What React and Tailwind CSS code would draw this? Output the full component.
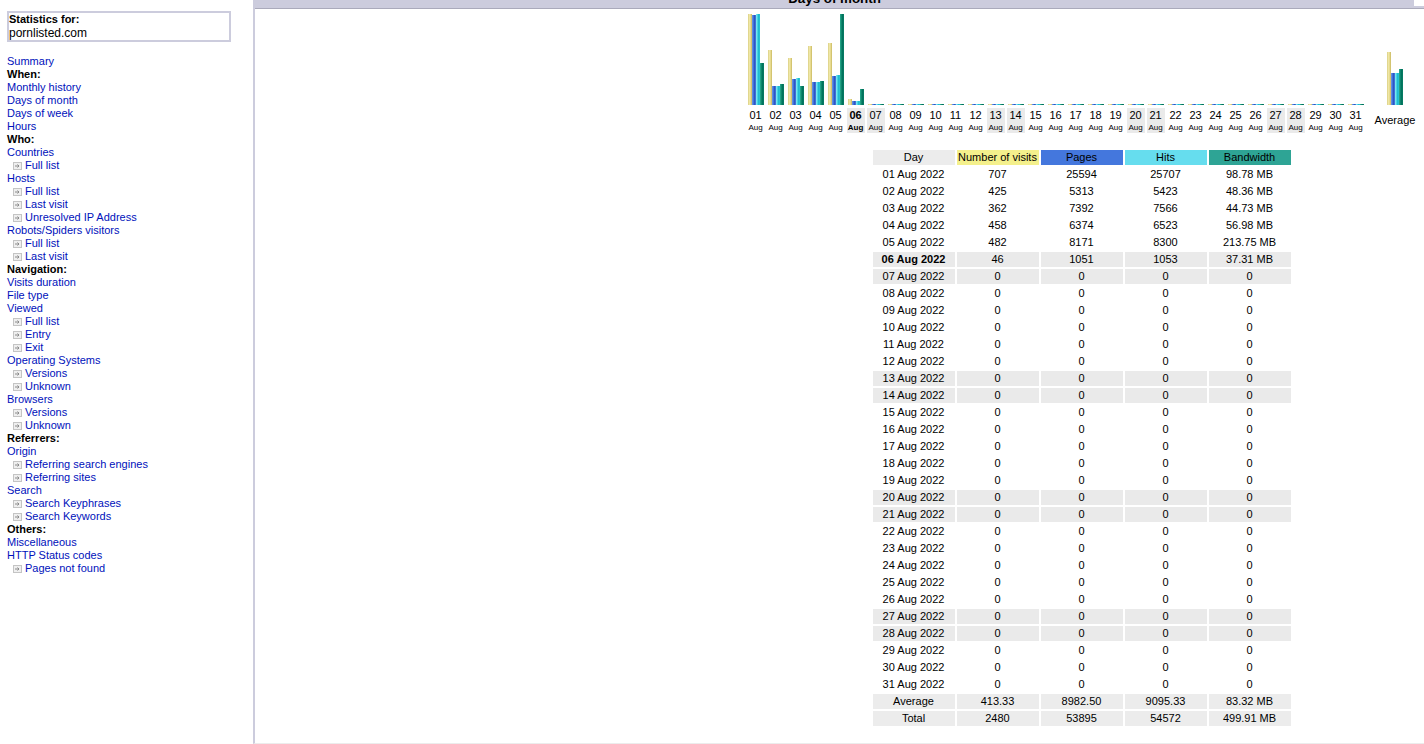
const navItems = [
  { t: "Summary" },
  { t: "When:", h: true },
  { t: "Monthly history" },
  { t: "Days of month" },
  { t: "Days of week" },
  { t: "Hours" },
  { t: "Who:", h: true },
  { t: "Countries" },
  { t: "Full list", sub: true },
  { t: "Hosts" },
  { t: "Full list", sub: true },
  { t: "Last visit", sub: true },
  { t: "Unresolved IP Address", sub: true },
  { t: "Robots/Spiders visitors" },
  { t: "Full list", sub: true },
  { t: "Last visit", sub: true },
  { t: "Navigation:", h: true },
  { t: "Visits duration" },
  { t: "File type" },
  { t: "Viewed" },
  { t: "Full list", sub: true },
  { t: "Entry", sub: true },
  { t: "Exit", sub: true },
  { t: "Operating Systems" },
  { t: "Versions", sub: true },
  { t: "Unknown", sub: true },
  { t: "Browsers" },
  { t: "Versions", sub: true },
  { t: "Unknown", sub: true },
  { t: "Referrers:", h: true },
  { t: "Origin" },
  { t: "Referring search engines", sub: true },
  { t: "Referring sites", sub: true },
  { t: "Search" },
  { t: "Search Keyphrases", sub: true },
  { t: "Search Keywords", sub: true },
  { t: "Others:", h: true },
  { t: "Miscellaneous" },
  { t: "HTTP Status codes" },
  { t: "Pages not found", sub: true },
];

const weekend = [6, 7, 13, 14, 20, 21, 27, 28];

const stats = {
  1: ["707", "25594", "25707", "98.78 MB"],
  2: ["425", "5313", "5423", "48.36 MB"],
  3: ["362", "7392", "7566", "44.73 MB"],
  4: ["458", "6374", "6523", "56.98 MB"],
  5: ["482", "8171", "8300", "213.75 MB"],
  6: ["46", "1051", "1053", "37.31 MB"],
};

const barHeights = {
  1: [91, 90, 91, 42],
  2: [55, 19, 19, 21],
  3: [47, 26, 27, 19],
  4: [59, 23, 23, 24],
  5: [62, 29, 30, 91],
  6: [6, 4, 4, 16],
};

const days = Array.from({ length: 31 }, (_, i) => i + 1);
const pad = (n) => String(n).padStart(2, "0");

const barColors = [
  "bg-[linear-gradient(90deg,#d8cc80,#f0e8a8,#e6d98c,#c8b860)]",
  "bg-[linear-gradient(90deg,#7099e8,#4477dd,#2a50c0,#5080e0)]",
  "bg-[linear-gradient(90deg,#8deef5,#50d8e8,#18b8cc,#30c8d8)]",
  "bg-[linear-gradient(90deg,#2fae90,#108a70,#00705a,#0a8068)]",
];

const Bars = ({ heights }) => (
  <div className="flex items-end justify-center">
    {heights.map((h, i) => (
      <div key={i} className={`w-1 ${barColors[i]}`} style={{ height: h }} />
    ))}
  </div>
);

const NavIcon = () => (
  <svg width="9" height="8" viewBox="0 0 9 8" className="mr-[3px] ml-[6px] inline-block align-[-1px]">
    <rect x="0.5" y="0.5" width="8" height="7" fill="#efefef" stroke="#c4c4c4" />
    <path d="M2 4h4M4.5 2.5L6 4 4.5 5.5" fill="none" stroke="#8a8a8a" strokeWidth="1" />
  </svg>
);

const Cell = ({ children, className = "" }) => (
  <div className={`flex h-[15px] w-[82px] items-center justify-center pr-px leading-[15px] ${className}`}>{children}</div>
);

export default function App() {
  return (
    <div className="relative flex h-[744px] w-[1424px] overflow-hidden bg-white font-['Liberation_Sans',Arial,sans-serif] text-[11px] leading-[13px] text-black">
      <aside className="w-[253px] shrink-0 pt-[11px] pl-[7px]">
        <div className="h-[31px] w-[224px] border-2 border-[#ccccdd]">
          <div className="font-bold">Statistics for:</div>
          <div className="text-[12px] leading-[14px]">pornlisted.com</div>
        </div>
        <nav className="mt-[13px]">
          {navItems.map((item, i) =>
            item.h ? (
              <div key={i} className="h-[13px] font-bold">{item.t}</div>
            ) : (
              <div key={i} className="h-[13px]">
                {item.sub && <NavIcon />}
                <a href="#" className="text-[#0011bb]">{item.t}</a>
              </div>
            )
          )}
        </nav>
      </aside>

      <main className="flex h-[744px] w-[1171px] flex-col border-b border-l-2 border-[#ccccdd] border-b-[#ececec]">
        <div className="flex h-[9px] w-full items-end justify-center overflow-hidden border-b border-[#aaaabb] bg-[#ccccdd] pr-[10px] pb-[2px]">
          <h1 className="text-[13.33px] leading-[15px] font-bold">Days of month</h1>
        </div>

        <div className="mt-[5px] flex items-start pl-[491px]">
          {days.map((d) => (
            <div key={d} className="flex w-5 flex-col items-center">
              <div className="flex h-[91px] items-end">
                <Bars heights={barHeights[d] || [1, 1, 1, 1]} />
              </div>
              <div
                className={`mt-[3px] flex h-[25px] w-[18px] flex-col items-center pt-[1px] pr-px ${
                  weekend.includes(d) ? "bg-[#eaeaea]" : ""
                } ${d === 6 ? "font-bold" : ""}`}
              >
                <span className="leading-[13px]">{pad(d)}</span>
                <span className="mt-px text-[8px] leading-[10px]">Aug</span>
              </div>
            </div>
          ))}
          <div className="ml-[9px] flex w-[40px] flex-col items-center">
            <div className="flex h-[91px] items-end">
              <Bars heights={[53, 32, 32, 36]} />
            </div>
            <div className="mt-[3px] pt-[6px]">Average</div>
          </div>
        </div>

        <div className="mt-[17px] ml-[618px] flex w-[418px] flex-col gap-[2px]">
          <div className="flex gap-[2px]">
            <Cell className="bg-[#ececec]">Day</Cell>
            <Cell className="bg-[#f4f08c]">Number of visits</Cell>
            <Cell className="bg-[#4477dd]">Pages</Cell>
            <Cell className="bg-[#66ddee]">Hits</Cell>
            <Cell className="bg-[#2ea495]">Bandwidth</Cell>
          </div>
          {days.map((d) => {
            const row = stats[d] || ["0", "0", "0", "0"];
            const bg = weekend.includes(d) ? "bg-[#eaeaea]" : "";
            return (
              <div key={d} className="flex gap-[2px]">
                <Cell className={`${bg} ${d === 6 ? "font-bold" : ""}`}>{pad(d)} Aug 2022</Cell>
                {row.map((v, i) => (
                  <Cell key={i} className={bg}>{v}</Cell>
                ))}
              </div>
            );
          })}
          <div className="flex gap-[2px]">
            {["Average", "413.33", "8982.50", "9095.33", "83.32 MB"].map((v) => (
              <Cell key={v} className="bg-[#ececec]">{v}</Cell>
            ))}
          </div>
          <div className="flex gap-[2px]">
            {["Total", "2480", "53895", "54572", "499.91 MB"].map((v) => (
              <Cell key={v} className="bg-[#ececec]">{v}</Cell>
            ))}
          </div>
        </div>
      </main>

      <div className="absolute top-0 right-0 h-[6px] w-[10px] bg-white" />
    </div>
  );
}
